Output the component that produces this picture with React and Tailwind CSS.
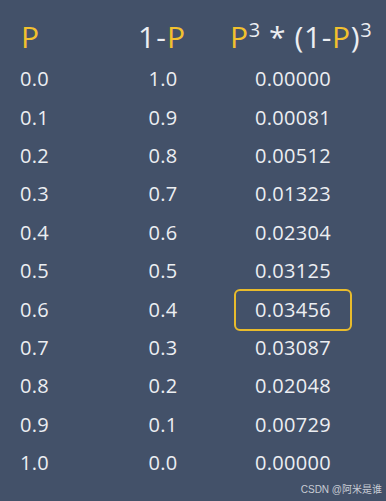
import React from "react";

const rows = [
  ["0.0", "1.0", "0.00000"],
  ["0.1", "0.9", "0.00081"],
  ["0.2", "0.8", "0.00512"],
  ["0.3", "0.7", "0.01323"],
  ["0.4", "0.6", "0.02304"],
  ["0.5", "0.5", "0.03125"],
  ["0.6", "0.4", "0.03456"],
  ["0.7", "0.3", "0.03087"],
  ["0.8", "0.2", "0.02048"],
  ["0.9", "0.1", "0.00729"],
  ["1.0", "0.0", "0.00000"],
];

export default function App() {
  return (
    <div
      className="relative w-[386px] h-[501px] bg-[#435169] text-[#eceef2] overflow-hidden"
      style={{ fontFamily: '"Open Sans", "Noto Sans", sans-serif' }}
    >
      <div className="flex h-[60px] pt-[22px] text-[30px] leading-[30px] pl-[20px]">
        <div className="w-[100px] text-[#f2c12e] pl-[1px]">P</div>
        <div className="w-[86px] text-center tracking-[1px] pr-[2px]">
          1-<span className="text-[#f2c12e]">P</span>
        </div>
        <div className="flex-1 pl-[24px] whitespace-nowrap tracking-[0.6px]">
          <span className="text-[#f2c12e]">P</span>
          <span className="relative top-[-11px] text-[20px]">3</span>
          <span> * (1-</span>
          <span className="text-[#f2c12e]">P</span>
          <span>)</span>
          <span className="relative top-[-11px] text-[20px]">3</span>
        </div>
      </div>
      <div className="flex flex-col pl-[20px]">
        {rows.map((r, i) => (
          <div key={i} className="flex h-[38.4px] items-center text-[20px] leading-[24px] tracking-[0.3px]">
            <div className="w-[100px]">{r[0]}</div>
            <div className="w-[86px] text-center">{r[1]}</div>
            <div className="w-[174px] flex justify-center">
              {i === 6 ? (
                <div className="w-[118px] h-[42px] border-[2.5px] border-[#e8bb2c] rounded-[6px] flex items-center justify-center">
                  {r[2]}
                </div>
              ) : (
                <span>{r[2]}</span>
              )}
            </div>
          </div>
        ))}
      </div>
      <div
        className="absolute right-[4px] bottom-[5px] text-[10px] leading-[13px] text-[#c8ccd4]"
        style={{ fontFamily: '"Liberation Sans", "Noto Sans CJK SC", sans-serif' }}
      >
        CSDN @阿米是谁
      </div>
    </div>
  );
}
